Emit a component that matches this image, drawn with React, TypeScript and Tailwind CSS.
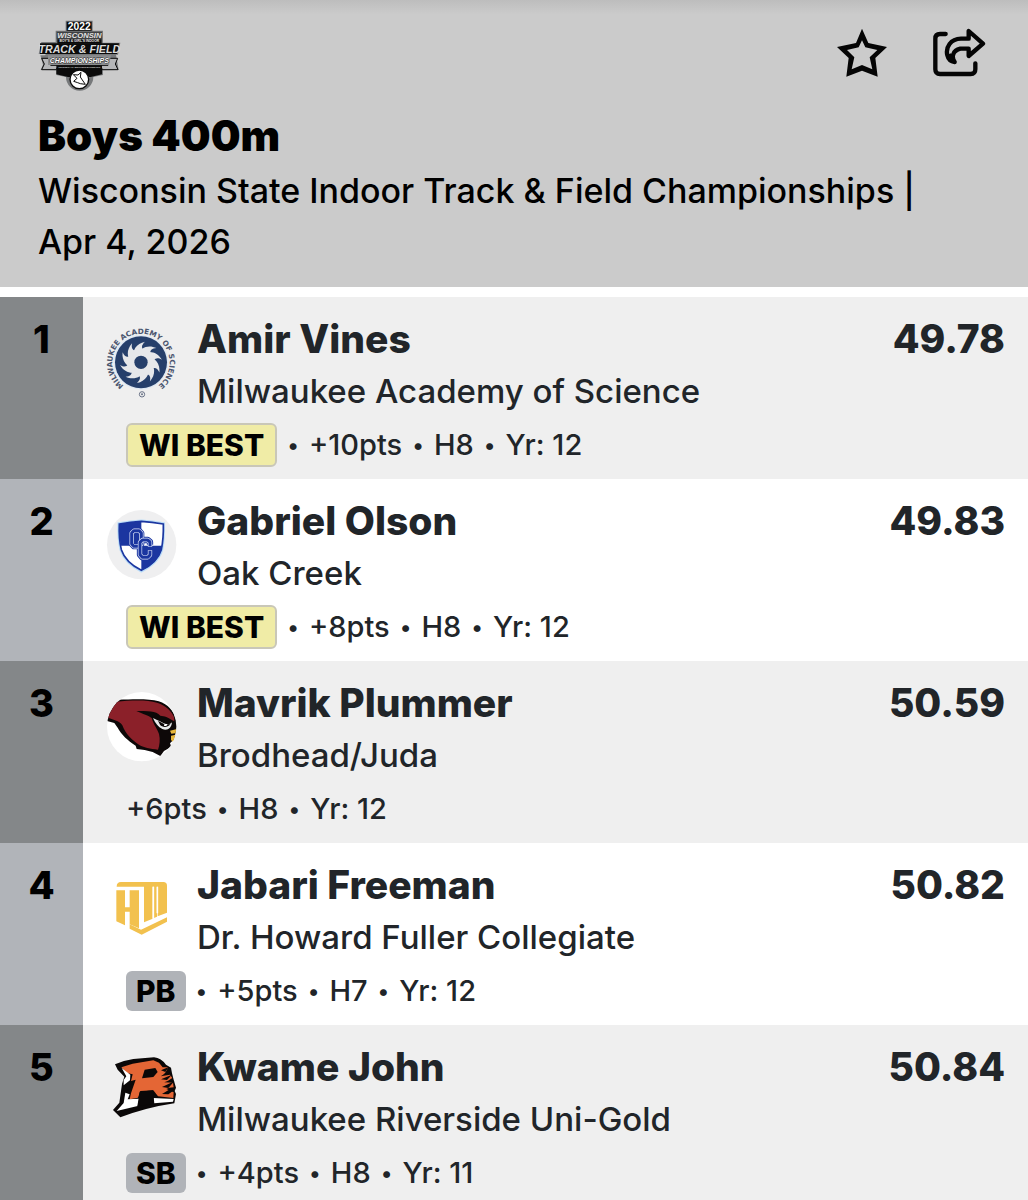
import type { ReactNode } from "react";

type Result = {
  place: number;
  name: string;
  school: string;
  time: string;
  badge?: "WI BEST" | "PB" | "SB";
  details: string[];
  logo: ReactNode;
};

const MeetLogo = () => (
  <svg viewBox="54 58 255 219" className="h-[73px] w-[85px]" role="img" aria-label="Meet logo">
    <g fontFamily="Liberation Sans, sans-serif" fontWeight="bold" textAnchor="middle">
      <path d="M137 63h81v30h31v36h52l-7 36h-6l8 46-47 1v14l-29 6a30 30 0 0 1-82 0l-29-6v-14l-47-1 7-16-8-28h13l4-4H56l8-36h43V93h30z" fill="#77797b" />
      <path d="M140 66h75v27h-75zM60 131h237l-6 32H60zM109 205h137v19l-34 8h-68l-35-8z" fill="#0b0b0b" />
      <path d="M110 96h136v23H110z" fill="#3f4142" />
      <path d="M112 119h133v13H112z" fill="#0b0b0b" />
      <text x="178" y="90" fontSize="31" fill="#fff">2022</text>
      <text x="178" y="116" fontSize="23" fontStyle="italic" fill="#e3e3e3">WISCONSIN</text>
      <text x="178" y="128" fontSize="10" fill="#e8e8e8">BOY'S &amp; GIRL'S INDOOR</text>
      <text x="178" y="159" fontSize="32" fontStyle="italic" fill="#dcdcdc">TRACK &amp; FIELD</text>
      <path d="M65 176h27v21h172v-21h29l-7 17 8 17h-48v-4H110v4H65l8-17z" fill="#b5b6b8" stroke="#0b0b0b" strokeWidth="3" />
      <path d="M84 167h189l-6 29H84z" fill="#8b8d8f" />
      <text x="178" y="189" fontSize="21" fontStyle="italic" fill="#fff" stroke="#2b2b2b" strokeWidth="3" paintOrder="stroke">CHAMPIONSHIPS</text>
      <path d="M109 197h137v12H109z" fill="#0b0b0b" />
      <text x="178" y="206" fontSize="6" fill="#ddd">UNIVERSITY OF WISCONSIN-WHITEWATER</text>
    </g>
    <circle cx="178" cy="239" r="28" fill="#fff" stroke="#0b0b0b" strokeWidth="4" />
    <path d="M160 225l14 1 9-8-2 14 6 9 9 13-15-2-8-3-12-4 10-9z" fill="#fff" stroke="#0b0b0b" strokeWidth="3" strokeLinejoin="round" />
  </svg>
);

const StarIcon = () => (
  <svg viewBox="50 54 150 150" className="size-[50px]" aria-hidden="true">
    <path
      d="M125 56L144 99L200 111L165 144L172 200L125 182L78 200L85 144L50 111L107 99ZM125 91L115 112L80 120L102 142L94 178L125 165L156 178L148 142L171 120L135 112Z"
      fill="#050505"
      fillRule="evenodd"
    />
  </svg>
);

const ShareIcon = () => (
  <svg viewBox="336 54 162 150" className="h-[50px] w-[54px]" aria-hidden="true">
    <g fill="none" stroke="#050505" strokeWidth="13" strokeLinecap="round" strokeLinejoin="round">
      <path d="M377 72H360Q346 72 346 86V178Q346 192 360 192H452Q466 192 466 178V160" />
      <path d="M446 63V86H423C392 87 376 111 382 136C385 149 394 155 404 156C394 142 397 122 421 116H446V138L489 101Z" />
    </g>
    <path d="M382 134l11-4 12 28-13-3-8-10z" fill="#050505" />
  </svg>
);

const logoClass = "size-[70px] shrink-0 overflow-visible";

const ScienceLogo = () => (
  <svg viewBox="51 54 210 210" className={logoClass} role="img" aria-label="Milwaukee Academy of Science logo">
    <circle cx="153" cy="157" r="82" fill="#dfe8f3" />
    <circle cx="153" cy="157" r="78" fill="#263f6b" />
    <g fill="#e6e7ea">
      {[0, 36, 72, 108, 144, 180, 216, 252, 288, 324].map((angle) => (
        <path
          key={angle}
          d="M131 144C125 122 139 100 165 95C155 104 154 111 159 118C165 127 165 134 162 140Z"
          transform={`rotate(${angle} 153 157)`}
        />
      ))}
    </g>
    <circle cx="153" cy="157" r="31" fill="none" stroke="#e6e7ea" strokeWidth="16" />
    <circle cx="153" cy="157" r="20" fill="#263f6b" />
    <path id="science-ring" d="M120 237A86 86 0 1 1 186 237" fill="none" />
    <text fontFamily="DejaVu Sans, sans-serif" fontWeight="bold" fontSize="22" fill="#4b5670">
      <textPath href="#science-ring" startOffset="50%" textAnchor="middle">
        MILWAUKEE ACADEMY OF SCIENCE
      </textPath>
    </text>
    <circle cx="156" cy="253" r="8" fill="none" stroke="#6b7488" strokeWidth="3" />
    <circle cx="156" cy="253" r="3" fill="#6b7488" />
  </svg>
);

const OakCreekLogo = () => (
  <svg viewBox="51 45 210 210" className={logoClass} role="img" aria-label="Oak Creek logo">
    <circle cx="155" cy="149" r="104" fill="#efeff0" />
    <path d="M154 76Q185 78 222 84Q224 130 217 165Q206 204 154 230Q104 205 91 165Q83 130 85 84Q122 78 154 76Z" fill="#fff" stroke="#b9dcf8" strokeWidth="5" />
    <path d="M154 79Q185 81 220 87Q221 130 214 164Q203 201 154 226Q106 201 94 164Q86 130 88 87Q122 81 154 79Z" fill="#fff" stroke="#1b36a0" strokeWidth="5" />
    <path d="M154 79Q122 81 88 87Q86 122 92 152H154ZM154 152H217Q209 202 154 226Z" fill="#1b36a0" />
    <g fill="none" strokeLinejoin="round">
      <path d="M132 107H147L154 114V147L147 154H132L125 147V114Z" stroke="#1b36a0" strokeWidth="18" />
      <path d="M180 149V141L173 135H157L150 142V179L157 187H173L180 180V172" stroke="#1b36a0" strokeWidth="19" />
      <path d="M132 107H147L154 114V147L147 154H132L125 147V114Z" stroke="#dfe6fa" strokeWidth="13" />
      <path d="M132 107H147L154 114V147L147 154H132L125 147V114Z" stroke="#1b36a0" strokeWidth="9" />
      <path d="M180 149V141L173 135H157L150 142V179L157 187H173L180 180V172" stroke="#dfe6fa" strokeWidth="13" strokeLinecap="square" />
      <path d="M180 149V141L173 135H157L150 142V179L157 187H173L180 180V172" stroke="#1b36a0" strokeWidth="9" strokeLinecap="square" />
    </g>
  </svg>
);

const CardinalLogo = () => (
  <svg viewBox="51 36 210 210" className={logoClass} role="img" aria-label="Brodhead/Juda logo">
    <clipPath id="cardinal-circle">
      <circle cx="155" cy="140" r="104" />
    </clipPath>
    <circle cx="155" cy="140" r="104" fill="#fff" />
    <g clipPath="url(#cardinal-circle)">
      <path d="M84 59C140 57 178 56 206 64C235 74 250 92 257 116L262 140L252 178L240 190L244 200L222 213L211 228L188 216L164 210L140 207L137 197C113 181 94 164 83 143L73 129L48 122V108L64 87Z" fill="#0d0808" />
      <path d="M78 65C125 61 171 59 201 68C226 76 244 92 252 111L253 124C232 111 224 108 211 107C197 91 174 95 139 93C159 102 176 107 185 114C191 135 203 148 207 162C211 178 209 196 204 209C182 206 159 202 147 194C127 181 107 164 97 136C87 121 69 121 52 112Z" fill="#8b2029" />
      <path d="M189 114C204 121 215 126 221 130C235 135 243 132 246 126C245 145 232 153 217 147C205 142 196 130 189 114Z" fill="#e9ebec" />
      <path d="M204 122L222 132L241 133C232 144 216 142 210 134Z" fill="#0d0808" />
      <path d="M223 132h10l-4 6h-7z" fill="#fff" />
      <path d="M240 152L262 147V159L244 161ZM243 167L262 163L250 187L243 180Z" fill="#e8b83c" />
    </g>
  </svg>
);

const FullerLogo = () => (
  <svg viewBox="51 42 210 210" className={logoClass} role="img" aria-label="Dr. Howard Fuller Collegiate logo">
    <g fill="#f2c14e">
      <path d="M80 80Q80 66 93 66H220Q231 66 231 77V158L203 169V80H201V170L192 174V80H188V176L162 187V80Z" />
      <path d="M79 91H105V142H119V91H147V205L119 193V155H105V196L79 184Z" />
      <path d="M119 193L153 209L231 172V185L155 224L119 206Z" />
    </g>
    <path d="M190 80V176M202 80V160" fill="none" stroke="#fff" strokeWidth="5" />
  </svg>
);

const RiversideLogo = () => (
  <svg viewBox="51 48 210 210" className={logoClass} role="img" aria-label="Milwaukee Riverside logo">
    <path d="M75 73Q101 61 130 57L192 52Q214 55 228 74L243 83L246 100L251 119L258 143L254 153L258 162L253 190Q171 202 91 232L69 210L88 188L96 132L103 110L83 89Z" fill="#0b0808" />
    <path d="M94 82L128 71L190 61L207 68L218 82L234 82Q228 102 212 109L240 104L247 114Q235 123 223 127L249 128L251 142Q236 142 229 147L251 157L250 174L204 169L190 151L151 153L144 173L119 178L123 160L137 119L123 123L128 103L110 99Z" fill="#e46635" />
    <path d="M95 84L121 104L120 121L101 136L101 120L109 109ZM106 158L119 163L113 178L148 176L143 198L80 213L101 189ZM190 174L251 177L249 185L192 190Z" fill="#fff" />
    <path d="M164 89L196 84L203 96L190 111L156 115ZM149 155L189 151L193 191L142 199ZM213 91L236 81L226 96ZM213 118L246 104L231 120ZM216 141L253 124L235 144ZM216 162L242 146L252 151L235 163ZM101 141L126 131L118 148L100 155Z" fill="#0b0808" />
  </svg>
);

const results: Result[] = [
  {
    place: 1,
    name: "Amir Vines",
    school: "Milwaukee Academy of Science",
    time: "49.78",
    badge: "WI BEST",
    details: ["+10pts", "H8", "Yr: 12"],
    logo: <ScienceLogo />,
  },
  {
    place: 2,
    name: "Gabriel Olson",
    school: "Oak Creek",
    time: "49.83",
    badge: "WI BEST",
    details: ["+8pts", "H8", "Yr: 12"],
    logo: <OakCreekLogo />,
  },
  {
    place: 3,
    name: "Mavrik Plummer",
    school: "Brodhead/Juda",
    time: "50.59",
    details: ["+6pts", "H8", "Yr: 12"],
    logo: <CardinalLogo />,
  },
  {
    place: 4,
    name: "Jabari Freeman",
    school: "Dr. Howard Fuller Collegiate",
    time: "50.82",
    badge: "PB",
    details: ["+5pts", "H7", "Yr: 12"],
    logo: <FullerLogo />,
  },
  {
    place: 5,
    name: "Kwame John",
    school: "Milwaukee Riverside Uni-Gold",
    time: "50.84",
    badge: "SB",
    details: ["+4pts", "H8", "Yr: 11"],
    logo: <RiversideLogo />,
  },
];

function Badge({ label }: { label: string }) {
  if (label === "WI BEST") {
    return (
      <span className="rounded-md border-2 border-[#c9c7b8] bg-[#f0eca6] px-[11px] text-[30px] leading-10 font-extrabold text-black">
        {label}
      </span>
    );
  }

  return (
    <span className="rounded-md bg-[#b0b3b8] px-[10px] text-[30px] leading-10 font-extrabold text-black">
      {label}
    </span>
  );
}

function ResultRow({ result }: { result: Result }) {
  const { place, name, school, time, badge, details, logo } = result;

  return (
    <li className="group flex odd:bg-[#efefef] even:bg-white">
      <div className="w-[83px] shrink-0 pt-4 text-center text-[38px] leading-[52px] font-extrabold text-black group-odd:bg-[#848789] group-even:bg-[#b1b4b9]">
        {place}
      </div>
      <div className="min-w-0 flex-1 pt-4 pr-[23px] pb-[6px] pl-6">
        <div className="flex gap-5">
          <div className="pt-[15px]">{logo}</div>
          <div className="min-w-0 flex-1">
            <div className="flex justify-between text-[39px] leading-[52px] font-extrabold">
              <h2>{name}</h2>
              <span>{time}</span>
            </div>
            <p className="text-[33px] leading-[52px] font-medium">{school}</p>
          </div>
        </div>
        <div className="ml-[19px] flex h-14 items-center gap-[10px] text-[29px] font-medium">
          {badge && <Badge label={badge} />}
          {details.map((detail, index) => (
            <span key={detail} className="flex items-center gap-[10px]">
              {(badge || index > 0) && <span className="text-[22px]">•</span>}
              {detail}
            </span>
          ))}
        </div>
      </div>
    </li>
  );
}

export default function App() {
  return (
    <div className="min-h-screen bg-white font-['Inter',sans-serif] text-[#212529]">
      <header className="bg-[#cbcbcb] bg-linear-to-b from-[#bdbdbd] to-[#cbcbcb] to-5% pt-[19px] pr-[42px] pb-5 pl-[38px] text-black">
        <div className="flex h-[72px] items-start justify-between">
          <MeetLogo />
          <div className="flex gap-[45px] pt-[9px]">
            <button type="button" aria-label="Favorite">
              <StarIcon />
            </button>
            <button type="button" aria-label="Share">
              <ShareIcon />
            </button>
          </div>
        </div>
        <h1 className="mt-[18px] text-[42px] leading-[54px] font-black">Boys 400m</h1>
        <p className="mt-0.5 pr-16 text-[34px] leading-[51px] font-medium">
          Wisconsin State Indoor Track &amp; Field Championships | Apr 4, 2026
        </p>
      </header>
      <main className="mt-[10px]">
        <ol>
          {results.map((result) => (
            <ResultRow key={result.place} result={result} />
          ))}
        </ol>
      </main>
    </div>
  );
}
